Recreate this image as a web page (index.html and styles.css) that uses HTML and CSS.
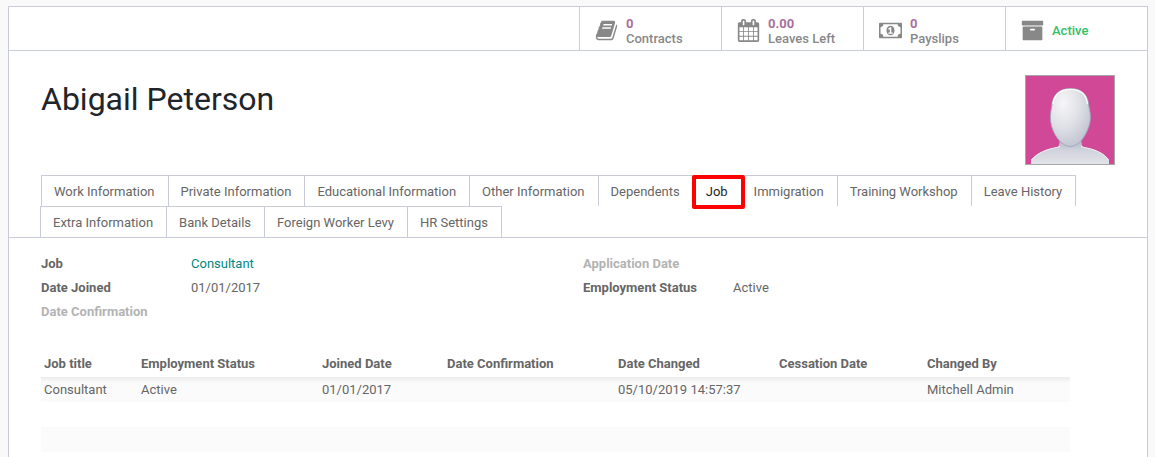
FILE: index.html
```html
<!DOCTYPE html>
<html lang="en">
<head>
<meta charset="utf-8">
<title>Abigail Peterson</title>
<link rel="stylesheet" href="styles.css">
</head>
<body>
<main class="sheet">
  <div class="button-box">
    <button type="button" class="stat">
      <span class="stat-icon"><svg class="icon" viewBox="0 0 1792 1792" aria-hidden="true"><path d="M1703 478q40 57 18 129l-275 906q-19 64-76.500 107.500t-122.500 43.500h-923q-77 0-148.500-53.500t-99.500-131.500q-24-67-2-127 0-4 3-27t4-37q1-8-3-21.500t-3-19.500q2-11 8-21t16.500-23.500 16.500-23.500q23-38 45-91.500t30-91.500q3-10 .5-30t-.5-28q3-11 17-28t17-23q21-36 42-92t25-90q1-9-2.500-32t.5-28q4-13 22-30.500t22-22.500q19-26 42.500-84.500t27.500-96.500q1-8-3-25.500t-2-26.500q2-8 9-18t18-23 17-21q8-12 16.500-30.500t15-35 16-36 19.500-32 26.500-23.500 36-11.500 47.500 5.500l-1 3q38-9 51-9h761q74 0 114 56t18 130l-274 906q-36 119-71.500 153.500t-128.500 34.500h-869q-27 0-38 15-11 16-1 43 24 70 144 70h923q29 0 56-15.500t35-41.500l300-987q7-22 5-57 38 15 59 43zm-1064 2q-4 13 2 22.500t20 9.500h608q13 0 25.500-9.500t16.500-22.500l21-64q4-13-2-22.500t-20-9.500h-608q-13 0-25.500 9.500t-16.500 22.500zm-83 256q-4 13 2 22.500t20 9.500h608q13 0 25.500-9.500t16.500-22.500l21-64q4-13-2-22.500t-20-9.500h-608q-13 0-25.500 9.500t-16.500 22.500z"/></svg></span>
      <span class="stat-text"><span class="stat-value">0</span><span>Contracts</span></span>
    </button>
    <button type="button" class="stat">
      <span class="stat-icon"><svg class="icon" viewBox="0 0 1792 1792" aria-hidden="true"><path d="M192 1664h288v-288h-288v288zm352 0h320v-288h-320v288zm-352-352h288v-320h-288v320zm352 0h320v-320h-320v320zm-352-384h288v-288h-288v288zm736 736h320v-288h-320v288zm-384-736h320v-288h-320v288zm768 736h288v-288h-288v288zm-384-352h320v-320h-320v320zm-352-864v-288q0-13-9.500-22.500t-22.500-9.500h-64q-13 0-22.500 9.500t-9.500 22.500v288q0 13 9.500 22.500t22.500 9.500h64q13 0 22.500-9.500t9.500-22.500zm736 864h288v-320h-288v320zm-384-384h320v-288h-320v288zm384 0h288v-288h-288v288zm32-480v-288q0-13-9.500-22.500t-22.500-9.500h-64q-13 0-22.500 9.500t-9.500 22.500v288q0 13 9.500 22.500t22.500 9.500h64q13 0 22.500-9.500t9.500-22.500zm384-64v1280q0 52-38 90t-90 38h-1408q-52 0-90-38t-38-90v-1280q0-52 38-90t90-38h128v-96q0-66 47-113t113-47h64q66 0 113 47t47 113v96h384v-96q0-66 47-113t113-47h64q66 0 113 47t47 113v96h128q52 0 90 38t38 90z"/></svg></span>
      <span class="stat-text"><span class="stat-value">0.00</span><span>Leaves Left</span></span>
    </button>
    <button type="button" class="stat">
      <span class="stat-icon"><svg class="icon" viewBox="0 0 24 24" aria-hidden="true"><path fill-rule="evenodd" d="M0 5q0-1 1-1h22q1 0 1 1v14q0 1-1 1H1q-1 0-1-1zM4.500 5.600A3 3 0 0 1 1.600 8.500v7a3 3 0 0 1 2.900 2.900h15a3 3 0 0 1 2.900-2.900v-7a3 3 0 0 1-2.900-2.900z"/><ellipse cx="12" cy="12" rx="4.200" ry="5"/><path class="icon-cutout" d="M9.800 14h1.500v-3.400l-1 .7-.9-1L11.600 8.500h1.200V14h1.500v1.300H9.800z"/></svg></span>
      <span class="stat-text"><span class="stat-value">0</span><span>Payslips</span></span>
    </button>
    <button type="button" class="stat">
      <span class="stat-icon"><svg class="icon" viewBox="0 0 1792 1792" aria-hidden="true"><path d="M1088 832q0-26-19-45t-45-19h-256q-26 0-45 19t-19 45 19 45 45 19h256q26 0 45-19t19-45zm576-192v960q0 26-19 45t-45 19h-1408q-26 0-45-19t-19-45v-960q0-26 19-45t45-19h1408q26 0 45 19t19 45zm64-448v256q0 26-19 45t-45 19h-1536q-26 0-45-19t-19-45v-256q0-26 19-45t45-19h1536q26 0 45 19t19 45z"/></svg></span>
      <span class="stat-text stat-active">Active</span>
    </button>
  </div>

  <header class="title-row">
    <h1 class="name">Abigail Peterson</h1>
    <svg class="avatar" viewBox="0 0 88 88" role="img" aria-label="Employee photo">
      <defs>
        <radialGradient id="head" cx="0.32" cy="0.25" r="0.85">
          <stop offset="0" stop-color="#f6f6f8"/>
          <stop offset="0.5" stop-color="#dfe0e6"/>
          <stop offset="1" stop-color="#bcc0cc"/>
        </radialGradient>
        <linearGradient id="body" x1="0" y1="0" x2="0" y2="1">
          <stop offset="0" stop-color="#b0b4c3"/>
          <stop offset="0.45" stop-color="#d0d3dc"/>
          <stop offset="1" stop-color="#e2e3e8"/>
        </linearGradient>
      </defs>
      <rect width="88" height="88" fill="#d04896"/>
      <path d="M5 88V84C11 77 21 73 31 71.500Q34 70.500 33.500 63H55.500Q55 70.500 58 71.500C68 73 78 77 83 84V88Z" fill="url(#body)"/>
      <path d="M5.500 84C11 77 21 73 31 71.500L34 70.500M55 70.500L58 71.500C68 73 78 77 82.500 84" fill="none" stroke="#f4f3f7"/>
      <path d="M44.500 12.500C57 12.500 62 20 62.800 30C64.800 38 65 44 63 50C59 62 52 70.500 44.500 70.500C37 70.500 29 62 25.500 50C24 44 24 38 25.800 30C26.500 20 32 12.500 44.500 12.500Z" fill="url(#head)" stroke="#a0a6bd" stroke-width="0.900"/>
      <path d="M27 28C28 19 34 13.300 44.500 13.300S60.500 19 61.500 28" fill="none" stroke="#fff" stroke-width="1.300"/>
    </svg>
  </header>

  <nav class="tabs">
    <button type="button" class="tab">Work Information</button>
    <button type="button" class="tab">Private Information</button>
    <button type="button" class="tab">Educational Information</button>
    <button type="button" class="tab">Other Information</button>
    <button type="button" class="tab">Dependents</button>
    <button type="button" class="tab tab-current" aria-current="true">Job</button>
    <button type="button" class="tab">Immigration</button>
    <button type="button" class="tab">Training Workshop</button>
    <button type="button" class="tab">Leave History</button>
    <button type="button" class="tab">Extra Information</button>
    <button type="button" class="tab">Bank Details</button>
    <button type="button" class="tab">Foreign Worker Levy</button>
    <button type="button" class="tab">HR Settings</button>
  </nav>

  <section class="page">
    <div class="groups">
      <dl class="fields">
        <dt>Job</dt><dd><a class="link" href="#">Consultant</a></dd>
        <dt>Date Joined</dt><dd>01/01/2017</dd>
        <dt class="empty">Date Confirmation</dt><dd></dd>
      </dl>
      <dl class="fields">
        <dt class="empty">Application Date</dt><dd></dd>
        <dt>Employment Status</dt><dd>Active</dd>
      </dl>
    </div>
    <table class="history">
      <colgroup>
        <col class="col-title"><col class="col-status"><col class="col-joined"><col class="col-confirmed"><col class="col-changed"><col class="col-cessation"><col>
      </colgroup>
      <thead>
        <tr><th>Job title</th><th>Employment Status</th><th>Joined Date</th><th>Date Confirmation</th><th>Date Changed</th><th>Cessation Date</th><th>Changed By</th></tr>
      </thead>
      <tbody>
        <tr><td>Consultant</td><td>Active</td><td>01/01/2017</td><td></td><td>05/10/2019 14:57:37</td><td></td><td>Mitchell Admin</td></tr>
        <tr><td colspan="7"></td></tr>
        <tr><td colspan="7"></td></tr>
        <tr><td colspan="7"></td></tr>
      </tbody>
    </table>
  </section>
</main>
</body>
</html>
```
FILE: styles.css
```css
* { box-sizing: border-box; }

body {
  margin: 0;
  padding: 6px 7px 0 8px;
  background: #f9f9f9;
  color: #666;
  font: 13px/20px Roboto, "Noto Sans", sans-serif;
  overflow: hidden;
}

button {
  margin: 0;
  font: inherit;
  color: inherit;
  background: none;
  border: 0;
  cursor: pointer;
}

.sheet {
  min-height: 100vh;
  background: #fff;
  border: 1px solid #c9ccd8;
}

/* Stat buttons */
.button-box {
  display: flex;
  justify-content: flex-end;
  border-bottom: 1px solid #c9ced8;
}

.stat {
  display: flex;
  align-items: center;
  width: 142px;
  height: 43px;
  padding: 4px 0 0 6px;
  border-left: 1px solid #c9ced8;
  color: #888;
  font-weight: 500;
  line-height: 15px;
  text-align: left;
}

.stat-icon {
  display: flex;
  justify-content: center;
  width: 40px;
}

.icon {
  width: 23px;
  height: 23px;
  fill: #888;
}

.icon .icon-cutout { fill: #fff; }

.stat-text {
  display: flex;
  flex-direction: column;
}

.stat-value {
  color: #a9709c;
  font-weight: 700;
}

.stat-active { color: #31c167; }

/* Name and photo */
.title-row {
  display: flex;
  justify-content: space-between;
  align-items: flex-start;
  padding: 24px 32px 10px;
}

.name {
  margin: 4px 0 0;
  color: #212529;
  font-size: 32px;
  font-weight: 400;
  line-height: 40px;
}

.avatar {
  width: 90px;
  height: 90px;
  border: 1px solid #a8a8a8;
}

/* Tabs */
.tabs {
  display: flex;
  flex-wrap: wrap;
  padding: 0 32px;
  border-bottom: 1px solid #c9ccd8;
}

.tab {
  position: relative;
  padding: 6px 13px 4px 12px;
  border: 1px solid #c9ccd8;
  border-bottom: 0;
  line-height: 20px;
}

.tab + .tab { margin-left: -1px; }

.tab-current {
  z-index: 1;
  color: #212529;
}

.tab-current::after {
  content: "";
  position: absolute;
  inset: -1px -4px -3px -2px;
  border: 4px solid #f00;
  border-radius: 2px;
}

/* Page content */
.page { padding: 14px 32px 0; }

.groups {
  display: grid;
  grid-template-columns: 1fr 1fr;
  gap: 10px;
}

.fields {
  display: grid;
  grid-template-columns: 150px 1fr;
  grid-auto-rows: 24px;
  align-content: start;
  margin: 0;
  line-height: 24px;
}

.fields dt { font-weight: 700; }
.fields .empty { color: #b3b3b3; }
.fields dd { margin: 0; }

.link {
  color: #008784;
  text-decoration: none;
}

.history {
  width: calc(100% - 45px);
  margin-top: 27px;
  border-collapse: collapse;
  table-layout: fixed;
}

.col-title { width: 97px; }
.col-status { width: 181px; }
.col-joined { width: 125px; }
.col-confirmed { width: 171px; }
.col-changed { width: 161px; }
.col-cessation { width: 148px; }

.history th,
.history td {
  height: 25px;
  padding: 0 3px;
  text-align: left;
  white-space: nowrap;
}

.history th {
  height: 26px;
  font-weight: 700;
}

.history tbody tr:nth-child(odd) { background: #fbfbfb; }

.history tbody tr:first-child {
  background: linear-gradient(#ececec, #fbfbfb 6px);
}
```
